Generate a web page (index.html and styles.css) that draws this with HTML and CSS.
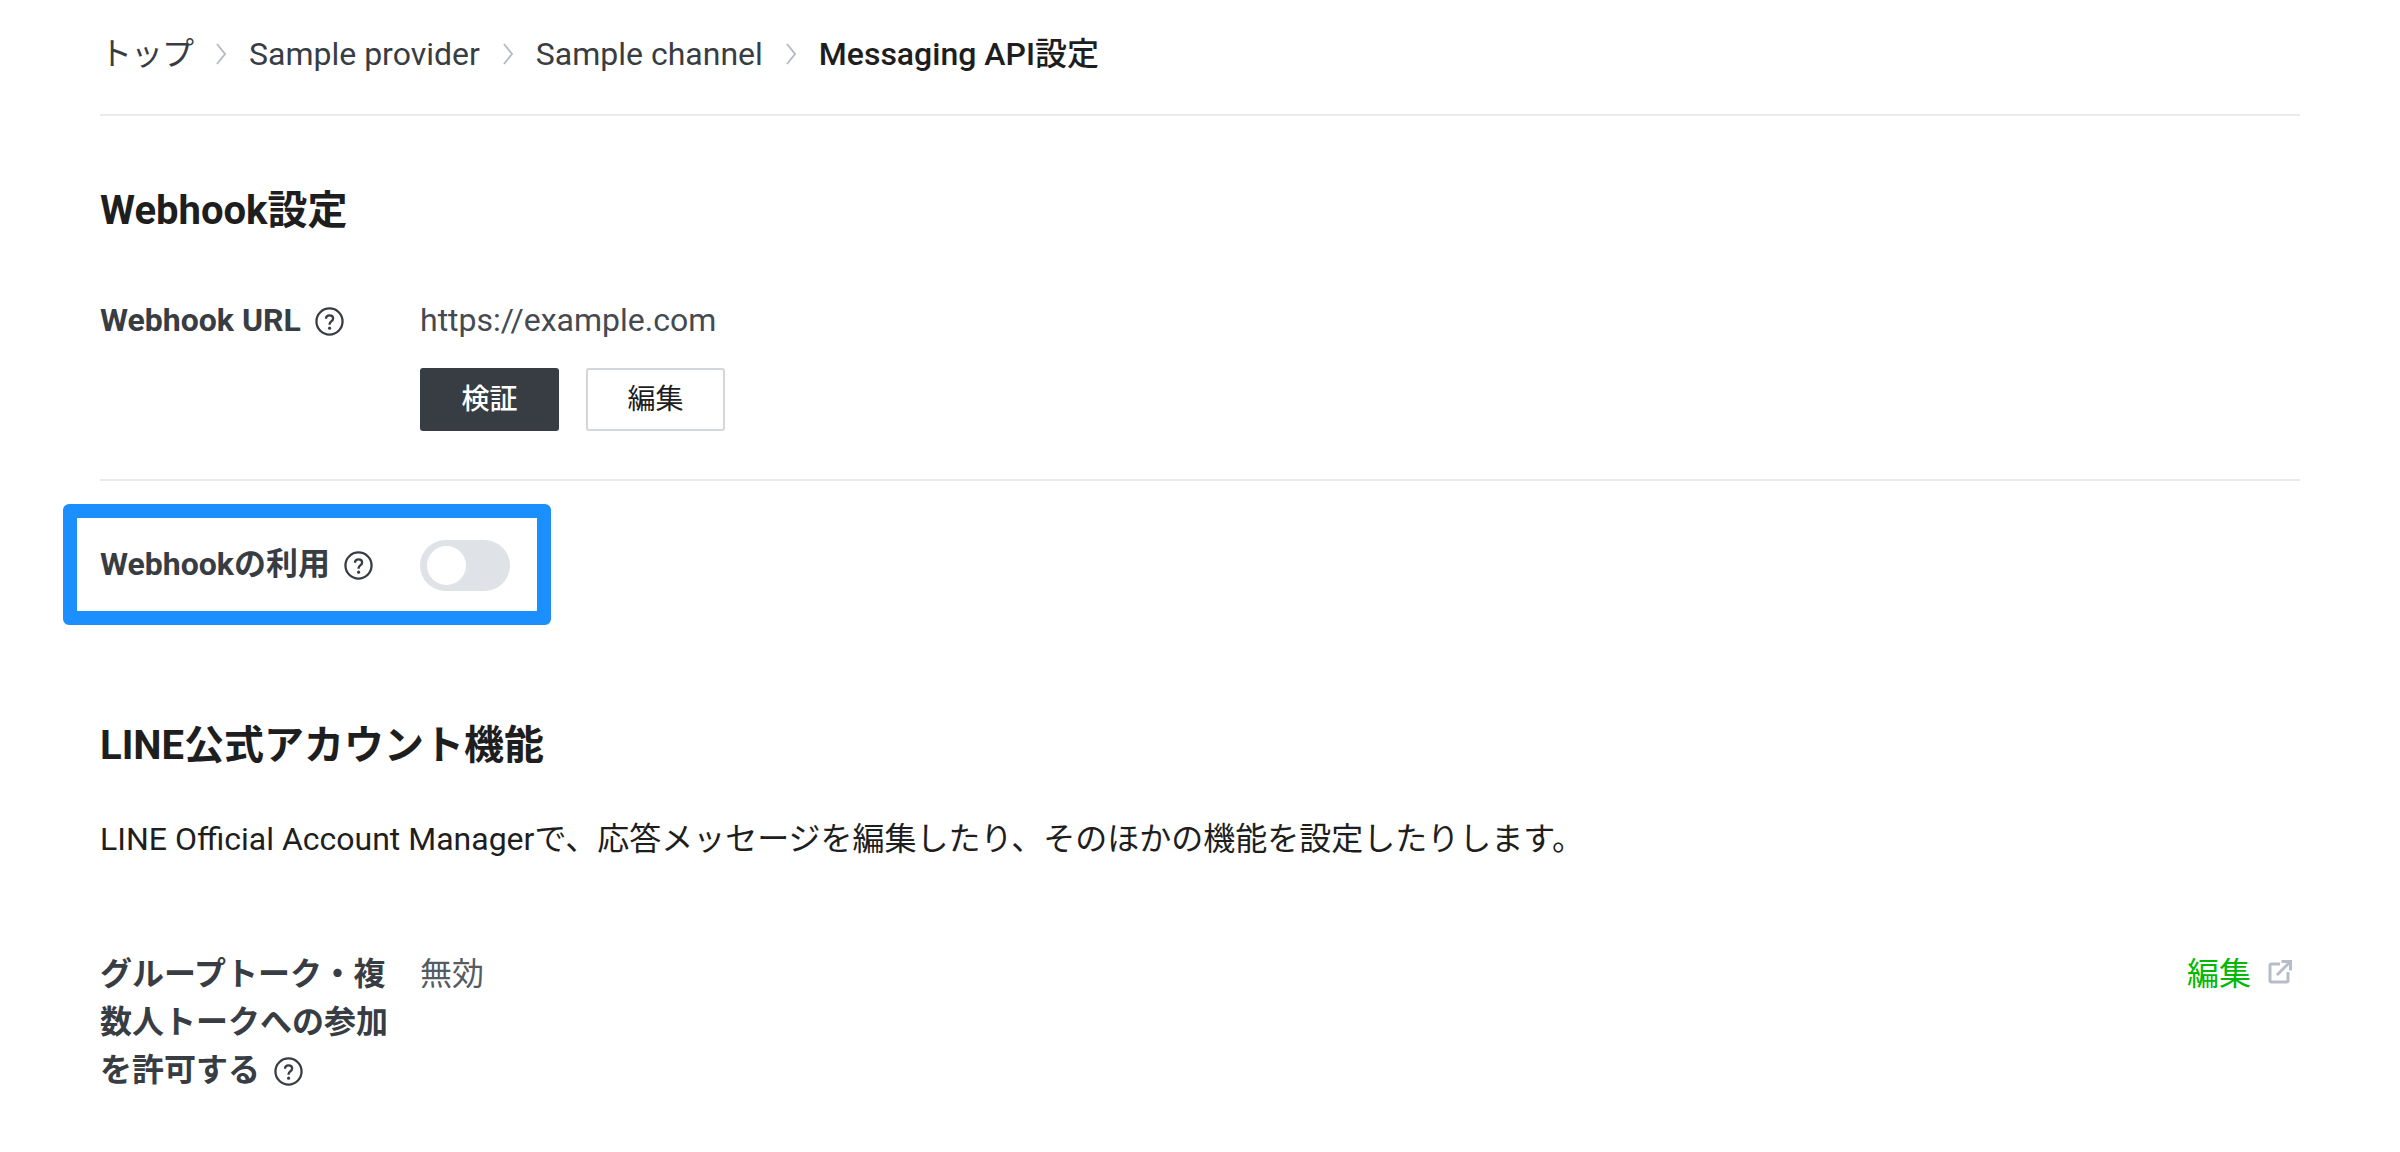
FILE: index.html
```html
<!DOCTYPE html>
<html lang="ja">
<head>
    <meta charset="UTF-8">
    <meta name="viewport" content="width=device-width, initial-scale=1.0">
    <title>Messaging API設定</title>
    <link rel="stylesheet" href="styles.css">
</head>
<body>
    <svg class="icon-defs" width="0" height="0">
        <symbol id="help" viewBox="0 0 28 28">
            <circle cx="14" cy="14" r="12.600" fill="none" stroke="currentColor" stroke-width="2.200"/>
            <path d="M10.600 11.400c0-2 1.500-3.300 3.500-3.300s3.400 1.200 3.400 3c0 1.400-.8 2.100-1.800 2.800-1 .8-1.600 1.300-1.600 2.600v.6" fill="none" stroke="currentColor" stroke-width="2.200"/>
            <circle cx="14.100" cy="20.400" r="1.500" fill="currentColor"/>
        </symbol>
        <symbol id="chevron" viewBox="0 0 12 24">
            <path d="M2 2l8 10-8 10" fill="none" stroke="currentColor" stroke-width="2"/>
        </symbol>
    </svg>

    <nav class="breadcrumb">
        <a class="top-link" href="#">トップ</a>
        <svg class="chevron"><use href="#chevron"/></svg>
        <a href="#">Sample provider</a>
        <svg class="chevron"><use href="#chevron"/></svg>
        <a href="#">Sample channel</a>
        <svg class="chevron"><use href="#chevron"/></svg>
        <span class="current">Messaging API設定</span>
    </nav>

    <section class="webhook">
        <h2>Webhook設定</h2>
        <div class="row url-row">
            <div class="label">Webhook URL <svg class="help"><use href="#help"/></svg></div>
            <div class="value">
                <div>https://example.com</div>
                <div class="buttons">
                    <button class="btn btn-dark">検証</button>
                    <button class="btn btn-light">編集</button>
                </div>
            </div>
        </div>
        <div class="row toggle-row">
            <div class="highlight"></div>
            <div class="label">Webhookの利用 <svg class="help"><use href="#help"/></svg></div>
            <div class="value"><span class="toggle"><span class="knob"></span></span></div>
        </div>
    </section>

    <section class="account">
        <h2>LINE公式アカウント機能</h2>
        <p class="lead">LINE Official Account Managerで、応答メッセージを編集したり、そのほかの機能を設定したりします。</p>
        <div class="row group-row">
            <div class="label">グループトーク・複数人トークへの参加を許可する <svg class="help"><use href="#help"/></svg></div>
            <div class="value muted">無効</div>
            <a class="edit-link" href="#">編集
                <svg class="external" viewBox="0 0 24 24">
                    <path d="M12 4H3.500A1.500 1.500 0 0 0 2 5.500V20.500A1.500 1.500 0 0 0 3.500 22H18.500A1.500 1.500 0 0 0 20 20.500V12" fill="none" stroke="currentColor" stroke-width="3"/>
                    <path d="M9 15L21 3M13.500 1.500H22.500V10.500" fill="none" stroke="currentColor" stroke-width="3"/>
                </svg>
            </a>
        </div>
    </section>
</body>
</html>
```

FILE: styles.css
```css
body {
    margin: 0;
    padding: 0 100px;
    height: 1152px;
    overflow: hidden;
    background: #fff;
    color: #383d44;
    font-family: Roboto, "Noto Sans CJK JP", sans-serif;
    font-size: 32px;
    line-height: 48px;
}

.icon-defs {
    position: absolute;
}

.breadcrumb {
    display: flex;
    align-items: center;
    height: 108px;
    padding-bottom: 6px;
    border-bottom: 2px solid #e9ebee;
}

.breadcrumb a {
    color: #383d44;
    text-decoration: none;
}

.top-link {
    letter-spacing: -1px;
}

.chevron {
    width: 12px;
    height: 24px;
    margin: 0 22px;
    color: #b7bdc5;
}

.current {
    color: #1e1e1e;
    font-weight: 500;
}

h2 {
    margin: 0;
    color: #1e1e1e;
    font-size: 40px;
    font-weight: 700;
    line-height: 60px;
}

.webhook h2 {
    padding-top: 65px;
}

.row {
    display: flex;
    position: relative;
}

.label {
    flex: none;
    width: 300px;
    margin-right: 20px;
    font-weight: 700;
}

.help {
    width: 29px;
    height: 29px;
    margin-left: 6px;
    vertical-align: -5px;
}

.value {
    flex: 1;
}

.url-row {
    margin-top: 55px;
    padding-bottom: 48px;
    border-bottom: 2px solid #e9ebee;
}

.url-row .value {
    color: #444a52;
}

.buttons {
    display: flex;
    gap: 27px;
    margin-top: 24px;
}

.btn {
    width: 139px;
    height: 63px;
    border-radius: 3px;
    font: inherit;
    font-size: 28px;
    cursor: pointer;
}

.btn-dark {
    border: none;
    background: #383d44;
    color: #fff;
    font-weight: 500;
}

.btn-light {
    border: 2px solid #d3d7dc;
    background: #fff;
    color: #1e1e1e;
}

.toggle-row {
    margin-top: 59px;
    align-items: center;
    height: 51px;
}

.toggle-row .label {
    margin-bottom: 4px;
}

/* annotation drawn over the screenshot */
.highlight {
    position: absolute;
    left: -37px;
    top: -36px;
    width: 488px;
    height: 121px;
    box-sizing: border-box;
    border: 14.500px solid #1c8fff;
    border-radius: 6px;
}

.toggle {
    display: block;
    width: 90px;
    height: 51px;
    padding: 6px 7px;
    box-sizing: border-box;
    border-radius: 26px;
    background: #dfe2e6;
}

.knob {
    display: block;
    width: 39px;
    height: 39px;
    border-radius: 50%;
    background: #fff;
}

.account {
    margin-top: 125px;
}

.lead {
    margin: 39px 0 0;
    color: #1e1e1e;
}

.group-row {
    margin-top: 87px;
}

.muted {
    color: #555b63;
}

.edit-link {
    display: flex;
    align-items: flex-start;
    gap: 17px;
    padding-right: 8px;
    color: #00b900;
    text-decoration: none;
    align-self: flex-start;
}

.external {
    width: 24px;
    height: 24px;
    margin-top: 10px;
    color: #b7bdc5;
}
```
